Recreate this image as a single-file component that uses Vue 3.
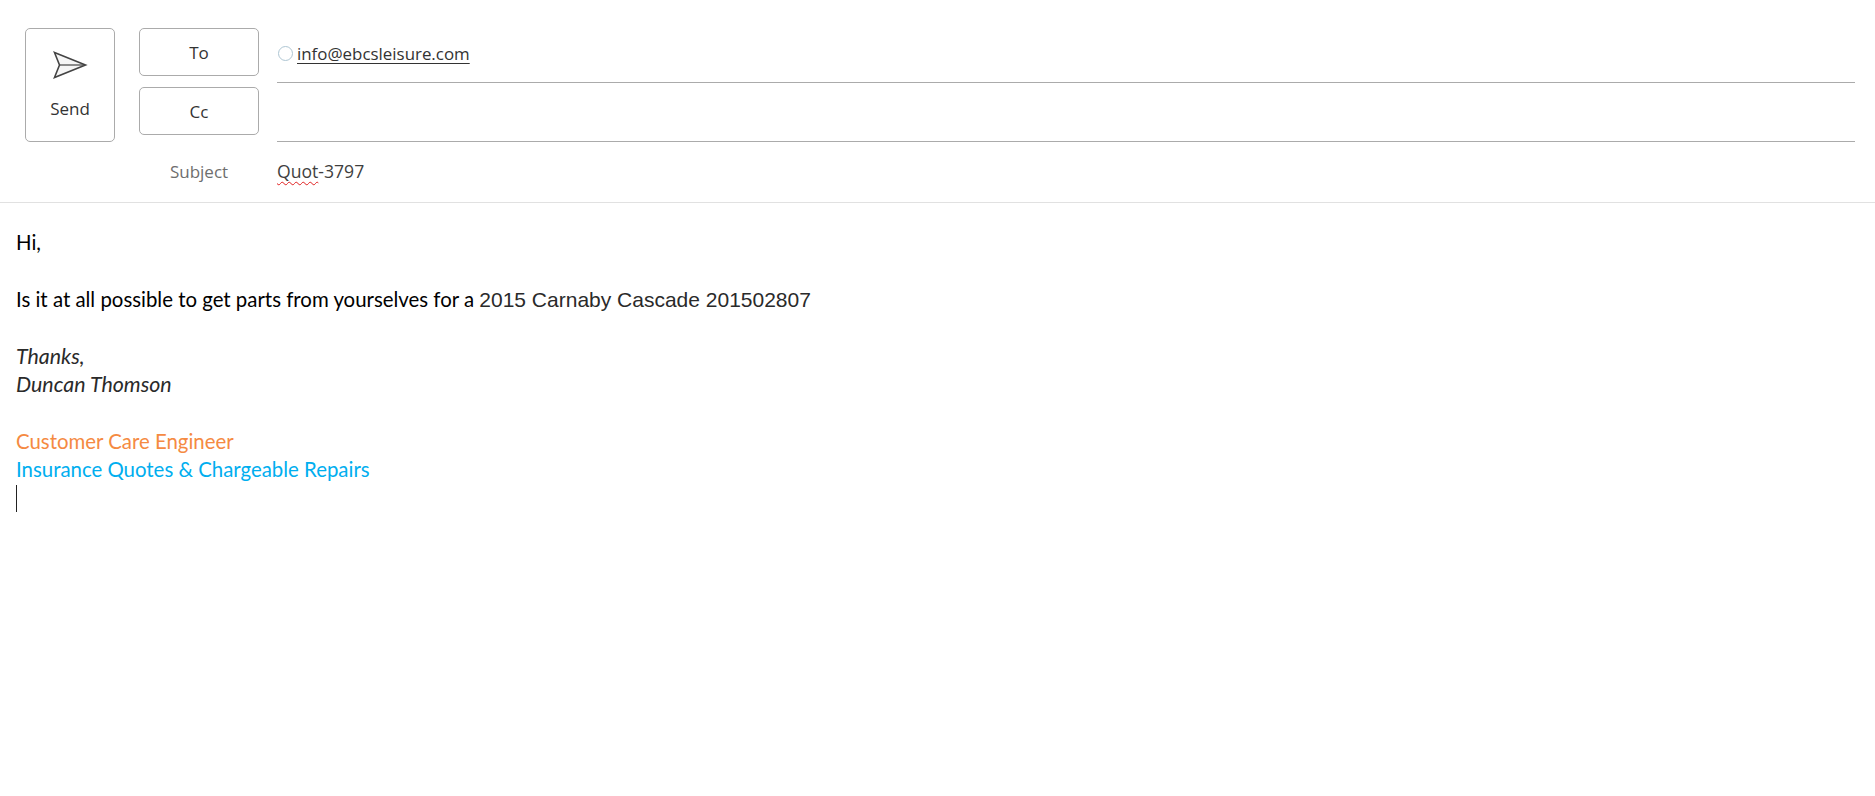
<script setup>
const body = [
  { id: 1, text: "Hi," },
  { id: 2, text: "" },
  { id: 3, text: "Is it at all possible to get parts from yourselves for a ", tail: "2015 Carnaby Cascade 201502807" },
  { id: 4, text: "" },
  { id: 5, text: "Thanks,", cls: "sig" },
  { id: 6, text: "Duncan Thomson", cls: "sig" },
  { id: 7, text: "" },
  { id: 8, text: "Customer Care Engineer", cls: "orange" },
  { id: 9, text: "Insurance Quotes & Chargeable Repairs", cls: "blue" },
];
</script>

<template>
  <div class="page">
    <header class="head">
      <button class="send">
        <svg class="plane" width="36" height="30" viewBox="0 0 36 30">
          <path d="M2.5 2.5 L33.5 15 L2.5 27.5 L7.5 15 Z" fill="#f6f6f6" stroke="#444" stroke-width="1.6" stroke-linejoin="miter" />
          <path d="M7.5 15 H33" fill="none" stroke="#444" stroke-width="1.2" />
        </svg>
        <span>Send</span>
      </button>
      <div class="fields">
        <div class="row">
          <button class="pick">To</button>
          <div class="value line">
            <span class="dot"></span>
            <span class="addr">info@ebcsleisure.com</span>
          </div>
        </div>
        <div class="row">
          <button class="pick">Cc</button>
          <div class="value line"></div>
        </div>
        <div class="row subject">
          <span class="label">Subject</span>
          <div class="value subj"><span class="typo">Quot</span>-3797</div>
        </div>
      </div>
    </header>
    <main class="body">
      <div v-for="l in body" :key="l.id" class="ln" :class="l.cls">
        {{ l.text }}<span v-if="l.tail" class="tail">{{ l.tail }}</span>
      </div>
      <div class="ln"><span class="caret"></span></div>
    </main>
  </div>
</template>

<style>
html,
body {
  background: #fff;
}
</style>

<style scoped>
.page {
  width: 1875px;
  height: 796px;
  overflow: hidden;
  background: #fff;
  font-family: "Open Sans", "Noto Sans", sans-serif;
  color: #333;
}
.head {
  display: flex;
  align-items: flex-start;
  height: 203px;
  padding: 28px 20px 0 25px;
  box-sizing: border-box;
  border-bottom: 1px solid #e1e1e1;
}
button {
  font: inherit;
  color: #333;
  background: #fff;
  border: 1px solid #ababab;
  border-radius: 5px;
  padding: 0;
}
.send {
  flex: none;
  width: 90px;
  height: 114px;
  margin-right: 24px;
  font-size: 17px;
  display: flex;
  flex-direction: column;
  align-items: center;
}
.plane {
  margin-top: 21px;
  margin-bottom: 17px;
}
.fields {
  flex: 1;
  display: flex;
  flex-direction: column;
}
.row {
  display: flex;
  height: 59px;
}
.pick {
  flex: none;
  width: 120px;
  height: 48px;
  font-size: 17px;
}
.value {
  flex: 1;
  margin-left: 18px;
  box-sizing: border-box;
  display: flex;
  align-items: center;
  font-size: 17px;
}
.line {
  height: 55px;
  border-bottom: 1px solid #ababab;
  padding-bottom: 4px;
}
.dot {
  width: 15px;
  height: 15px;
  box-sizing: border-box;
  border: 1px solid #aec6d3;
  border-radius: 50%;
  margin: 0 4px 0 1px;
}
.addr {
  font-size: 16.9px;
  text-decoration: underline;
  text-underline-offset: 3px;
}
.subject {
  height: 40px;
  margin-top: 5px;
  align-items: center;
}
.label {
  flex: none;
  width: 120px;
  text-align: center;
  font-size: 17px;
  color: #6e6e6e;
}
.subj {
  font-size: 17.6px;
  color: #3f3f3f;
}
.typo {
  text-decoration: underline wavy #e02020 1px;
  text-underline-offset: 3px;
}
.body {
  padding: 25.2px 16px 0;
  font-family: Lato, "Open Sans", sans-serif;
  font-size: 20.4px;
  color: #000;
}
.ln {
  height: 28.4px;
  line-height: 28.4px;
  white-space: pre;
}
.tail {
  font-family: "Liberation Sans", Arial, sans-serif;
  color: #2a2a2a;
  font-size: 21px;
}
.sig {
  font-style: italic;
  font-size: 21.4px;
  color: #2a2a2a;
}
.orange {
  color: #f58a42;
}
.blue {
  color: #00aeef;
}
.caret {
  display: block;
  width: 1px;
  height: 27px;
  margin-top: 1px;
  background: #222;
}
</style>
